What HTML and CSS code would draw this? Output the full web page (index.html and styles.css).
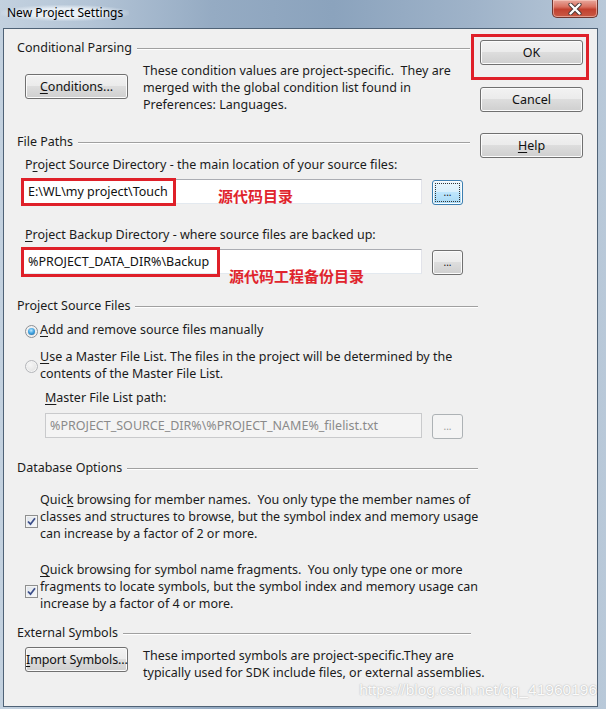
FILE: index.html
```html
<!DOCTYPE html>
<html>
<head>
<meta charset="utf-8">
<title>New Project Settings</title>
<link rel="stylesheet" href="styles.css">
</head>
<body>
<div class="window">
  <div class="titlebar">
    <span class="title">New Project Settings</span>
    <button class="close" aria-label="Close">
      <svg width="16" height="12" viewBox="0 0 16 12">
        <path d="M3.5 1.5 L12.5 10.5 M12.5 1.5 L3.5 10.5" stroke="#4b3a38" stroke-width="4.2" stroke-linecap="round"/>
        <path d="M3.5 1.5 L12.5 10.5 M12.5 1.5 L3.5 10.5" stroke="#ffffff" stroke-width="2.4" stroke-linecap="round"/>
      </svg>
    </button>
  </div>
  <div class="client">
    <div class="main">
      <div class="ghead short"><span>Conditional Parsing</span><i></i></div>
      <div class="btnrow cp-row">
        <button class="btn wide"><u>C</u>onditions...</button>
        <p class="desc">These condition values are project-specific.&nbsp; They are<br>merged with the global condition list found in<br>Preferences: Languages.</p>
      </div>

      <div class="ghead short fp-head"><span>File Paths</span><i></i></div>
      <div class="label">P<u>r</u>oject Source Directory - the main location of your source files:</div>
      <div class="inrow">
        <div class="field">
          <div class="input">E:\WL\my project\Touch</div>
          <span class="redbox rb-src"></span>
          <span class="note note-src">源代码目录</span>
        </div>
        <button class="btn browse focused">...</button>
      </div>
      <div class="label backup-label"><u>P</u>roject Backup Directory - where source files are backed up:</div>
      <div class="inrow">
        <div class="field">
          <div class="input">%PROJECT_DATA_DIR%\Backup</div>
          <span class="redbox rb-bak"></span>
          <span class="note note-bak">源代码工程备份目录</span>
        </div>
        <button class="btn browse">...</button>
      </div>

      <div class="ghead psf-head"><span>Project Source Files</span><i></i></div>
      <div class="opt opt1">
        <span class="radio on"></span>
        <span class="otext"><u>A</u>dd and remove source files manually</span>
      </div>
      <div class="opt opt2">
        <span class="radio"></span>
        <span class="otext"><u>U</u>se a Master File List. The files in the project will be determined by the<br>contents of the Master File List.</span>
      </div>
      <div class="label master-label"><u>M</u>aster File List path:</div>
      <div class="inrow">
        <div class="input disabled">%PROJECT_SOURCE_DIR%\%PROJECT_NAME%_filelist.txt</div>
        <button class="btn browse dis">...</button>
      </div>

      <div class="ghead db-head"><span>Database Options</span><i></i></div>
      <div class="opt chk1">
        <span class="check"><svg width="9" height="9" viewBox="0 0 9 9"><path d="M1 4.5 L3.5 7.2 L8 1.2" fill="none" stroke="#3d4f8a" stroke-width="1.8"/></svg></span>
        <span class="otext">Quic<u>k</u> browsing for member names.&nbsp; You only type the member names of<br>classes and structures to browse, but the symbol index and memory usage<br>can increase by a factor of 2 or more.</span>
      </div>
      <div class="opt chk2">
        <span class="check"><svg width="9" height="9" viewBox="0 0 9 9"><path d="M1 4.5 L3.5 7.2 L8 1.2" fill="none" stroke="#3d4f8a" stroke-width="1.8"/></svg></span>
        <span class="otext"><u>Q</u>uick browsing for symbol name fragments.&nbsp; You only type one or more<br>fragments to locate symbols, but the symbol index and memory usage can<br>increase by a factor of 4 or more.</span>
      </div>

      <div class="ghead es-head"><span>External Symbols</span><i></i></div>
      <div class="btnrow es-row">
        <button class="btn wide import"><u>I</u>mport Symbols...</button>
        <p class="desc">These imported symbols are project-specific.They are<br>typically used for SDK include files, or external assemblies.</p>
      </div>
    </div>

    <div class="side">
      <div class="okwrap">
        <button class="btn side-btn">OK</button>
        <span class="redbox rb-ok"></span>
      </div>
      <button class="btn side-btn cancel">Cancel</button>
      <button class="btn side-btn help"><u>H</u>elp</button>
    </div>

    <div class="watermark">https://blog.csdn.net/qq_41960196</div>
  </div>
</div>
</body>
</html>
```
FILE: styles.css
```css
* { box-sizing: border-box; }
html, body { margin: 0; padding: 0; }
body {
  width: 606px;
  height: 709px;
  overflow: hidden;
  background: linear-gradient(90deg, #c3d1df 0%, #b3c4d6 15%, #95abc3 35%, #8ba3bd 55%, #9fb3c9 78%, #b9c9d9 100%);
  font-family: "Noto Sans", "Open Sans", sans-serif;
  font-size: 12px;
  color: #1b1b1b;
}
u { text-decoration: underline; text-underline-offset: 2px; }

.window { display: flex; flex-direction: column; height: 709px; }

.titlebar {
  height: 28px;
  flex: none;
  display: flex;
  align-items: flex-start;
  padding: 0 8px 0 7px;
}
.title {
  margin-top: 5px;
  line-height: 16px;
  font-size: 12px;
  color: #000;
  background: radial-gradient(ellipse at center, rgba(235,241,247,0.95) 40%, rgba(235,241,247,0) 75%);
  padding: 0 6px;
  margin-left: -6px;
}
.close {
  margin-left: auto;
  width: 46px;
  height: 18px;
  border: 1px solid #6d3630;
  border-top: none;
  border-radius: 0 0 5px 5px;
  background: linear-gradient(#e8a89d 0%, #d9705f 40%, #c2412f 55%, #c95a45 100%);
  box-shadow: inset 0 0 0 1px rgba(255,220,210,0.5);
  padding: 0;
  display: flex;
  align-items: center;
  justify-content: center;
}

.client {
  flex: 1;
  margin: 0 8px 2px 3px;
  border: 1px solid #4f6276;
  background: #f0f0f0;
  display: flex;
  align-items: flex-start;
  position: relative;
  font-size: 12.5px;
}

.main {
  width: 474px;
  padding: 10px 0 0 13px;
  flex: none;
}

.ghead {
  display: flex;
  align-items: center;
  height: 17px;
  line-height: 17px;
  white-space: nowrap;
}
.ghead i {
  flex: 1;
  margin-left: 5px;
  border-top: 1px solid #a0a0a0;
  box-shadow: 0 1px 0 #ffffff;
  height: 0;
  margin-top: 1px;
}
.ghead.short { margin-right: 8px; }
.es-head { margin-right: 7px; }

.btnrow { display: flex; align-items: flex-start; margin-top: 6px; }
.desc { margin: 0 0 0 15px; line-height: 17px; white-space: nowrap; }
.cp-row .btn { margin-top: 12px; }
.es-row { margin-top: 6px; }

.btn {
  height: 25px;
  border: 1px solid #707070;
  border-radius: 3px;
  background: linear-gradient(#f2f2f2 0%, #ebebeb 48%, #dddddd 50%, #cfcfcf 100%);
  box-shadow: inset 0 0 0 1px #fbfbfb;
  font: inherit;
  color: #111;
  padding: 0;
  line-height: 21px;
  flex: none;
  white-space: nowrap;
}
.btn.wide { width: 103px; margin-left: 8px; }
.btn.import { letter-spacing: -0.1px; }

.fp-head { margin-top: 20px; }
.label { margin-top: 6px; padding-left: 8px; line-height: 17px; white-space: nowrap; }
.backup-label { margin-top: 21px; }
.master-label { margin-top: 7px; padding-left: 28px; }

.inrow { display: flex; align-items: flex-start; margin-top: 6px; }
.field { position: relative; margin-left: 6px; width: 399px; height: 25px; flex: none; }
.input {
  height: 25px;
  width: 100%;
  background: #fff;
  border: 1px solid #e2e3ea;
  border-top-color: #abadb3;
  border-bottom-color: #e3e9ef;
  padding-left: 4px;
  line-height: 23px;
  white-space: nowrap;
  color: #111;
}
.input.disabled {
  margin-left: 28px;
  width: 377px;
  flex: none;
  background: #f4f4f4;
  border: 1px solid #c9cacc;
  color: #8a8a8a;
}
.master-label + .inrow { margin-top: 7px; }

.browse {
  width: 31px;
  margin-left: 10px;
  margin-top: 1px;
  font-size: 10px;
  line-height: 19px;
}
.browse.focused {
  border-color: #3c7fb1;
  background: linear-gradient(#eaf6fd 0%, #d9f0fc 48%, #bee6fd 50%, #a7d9f5 100%);
  outline: 1px dotted #333;
  outline-offset: -4px;
}
.browse.dis {
  border-color: #adb2b5;
  background: #f4f4f4;
  box-shadow: none;
  color: #9a9a9a;
}

.redbox {
  position: absolute;
  border: 3px solid #df2029;
  pointer-events: none;
}
.rb-src { left: -2px; top: -1px; width: 155px; height: 28px; }
.rb-bak { left: -2px; top: -2px; width: 199px; height: 30px; }
.note {
  position: absolute;
  font-family: "Noto Sans CJK SC", sans-serif;
  font-weight: 700;
  font-size: 15px;
  line-height: 15px;
  color: #e0242c;
  white-space: nowrap;
}
.note-src { left: 195px; top: 9px; }
.note-bak { left: 206px; top: 19px; }

.psf-head { margin-top: 22px; }
.db-head { margin-top: 20px; }

.opt { display: flex; align-items: flex-start; line-height: 17px; white-space: nowrap; padding-left: 8px; }
.opt1 { margin-top: 7px; }
.opt2 { margin-top: 10px; }
.otext { margin-left: 2px; }

.radio {
  width: 13px;
  height: 13px;
  flex: none;
  border-radius: 50%;
  border: 1px solid #8d9095;
  background: radial-gradient(circle at 40% 35%, #f6f6f6 0%, #dcdcdc 100%);
  box-shadow: inset 0 0 0 1px #f4f4f4;
  position: relative;
}
.opt1 .radio { margin-top: 4px; }
.opt2 .radio { margin-top: 12px; border-color: #b4b6ba; }
.radio.on::after {
  content: "";
  position: absolute;
  left: 2px; top: 2px;
  width: 7px; height: 7px;
  border-radius: 50%;
  background: radial-gradient(circle at 45% 35%, #bfe8ff 0%, #44a6e3 45%, #1d5f96 100%);
}

.chk1 { margin-top: 15px; }
.chk2 { margin-top: 19px; }
.check {
  width: 13px;
  height: 13px;
  flex: none;
  margin-top: 24px;
  border: 1px solid #8e8f8f;
  background: linear-gradient(135deg, #dde3ea 0%, #f8f9fb 100%);
  box-shadow: inset 0 0 0 1px #f4f4f4;
  display: flex;
  align-items: center;
  justify-content: center;
}
.check svg { display: block; }

.es-head { margin-top: 12px; }

.side {
  width: 103px;
  margin-left: 2px;
  padding-top: 11px;
  display: flex;
  flex-direction: column;
  flex: none;
  font-size: 12.5px;
}
.okwrap { position: relative; height: 25px; }
.side-btn { width: 103px; }
.cancel { margin-top: 22px; }
.help { margin-top: 21px; }
.rb-ok { left: -9px; top: -6px; width: 118px; height: 46px; }

.watermark {
  position: absolute;
  right: 0;
  bottom: 8px;
  font-family: "Liberation Sans", Arial, sans-serif;
  font-size: 15.5px;
  line-height: 16px;
  color: #fbfbfb;
  text-shadow: 0 0 1.5px #9c9c9c;
  white-space: nowrap;
}
```
